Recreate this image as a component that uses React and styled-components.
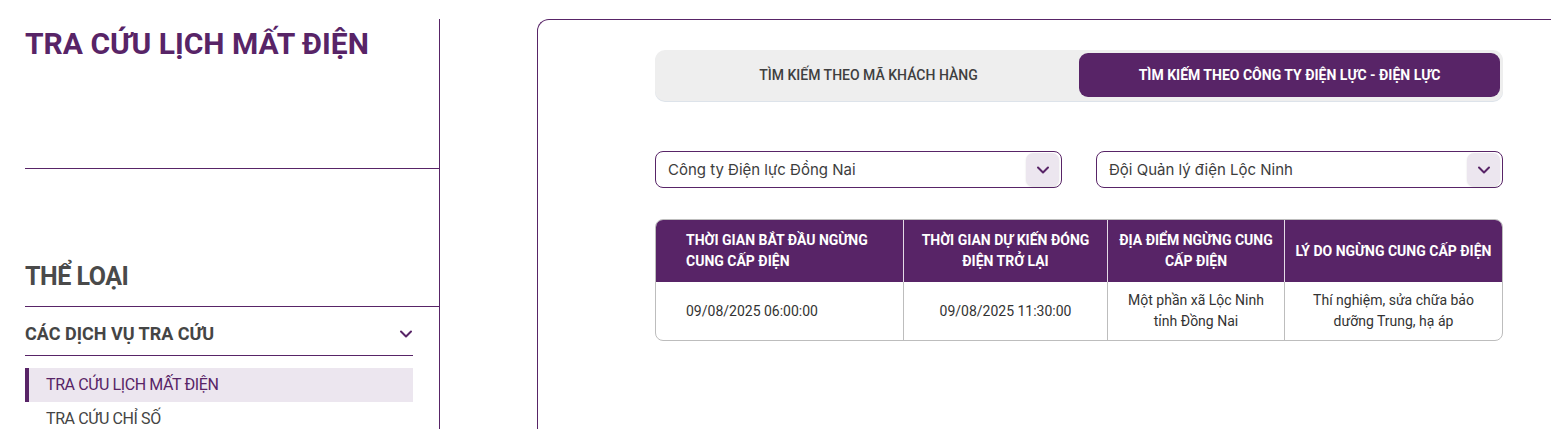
import styled, { createGlobalStyle } from "styled-components";

const purple = "#582467";

const Global = createGlobalStyle`
  *, *::before, *::after { box-sizing: border-box; }
  html, body {
    margin: 0;
    padding: 0;
    overflow: hidden;
    background: #fff;
    font-family: Roboto, "Liberation Sans", sans-serif;
  }
`;

const Page = styled.div`
  display: flex;
  height: 100vh;
  overflow: hidden;
`;

const Sidebar = styled.aside`
  flex-shrink: 0;
  width: 440px;
  margin-top: 19px;
  padding-left: 25px;
  border-right: 1px solid ${purple};
  display: flex;
  flex-direction: column;
  & > * { flex-shrink: 0; }
`;

const TitleBox = styled.div`
  height: 150px;
  padding-top: 7px;
  border-bottom: 1px solid ${purple};
`;

const Title = styled.h1`
  margin: 0;
  font-size: 30px;
  line-height: 36px;
  font-weight: 700;
  color: ${purple};
`;

const Category = styled.h2`
  margin: 93px 0 0;
  padding-bottom: 14px;
  font-size: 25px;
  line-height: 30px;
  font-weight: 700;
  letter-spacing: -0.5px;
  color: #4a4a4a;
  border-bottom: 1px solid ${purple};
`;

const Group = styled.div`
  width: 388px;
`;

const GroupHead = styled.div`
  display: flex;
  justify-content: space-between;
  align-items: center;
  padding: 17px 0 11px;
  border-bottom: 1px solid ${purple};
  font-size: 18px;
  line-height: 20px;
  font-weight: 700;
  color: #454545;
`;

const MenuList = styled.div`
  margin-top: 12px;
  display: flex;
  flex-direction: column;
`;

const MenuItem = styled.div`
  height: 34px;
  line-height: 34px;
  font-size: 16px;
  letter-spacing: -0.4px;
  color: ${(p) => (p.$active ? purple : "#444")};
  background: ${(p) => (p.$active ? "#ece6ef" : "transparent")};
  border-left: ${(p) => (p.$active ? `4px solid ${purple}` : "none")};
  padding-left: ${(p) => (p.$active ? "17px" : "21px")};
`;

const Panel = styled.main`
  flex: 1;
  margin: 19px 0 0 97px;
  padding: 30px 48px 0 117px;
  border-top: 1px solid ${purple};
  border-left: 1px solid ${purple};
  border-top-left-radius: 12px;
`;

const Content = styled.div`
  width: 848px;
  display: flex;
  flex-direction: column;
`;

const Tabs = styled.div`
  display: grid;
  grid-template-columns: 1fr 1fr;
  padding: 3px 3px 4px;
  background: #eeeeee;
  border-radius: 10px;
  box-shadow: 0 1px 0 #dde3ea;
`;

const Tab = styled.div`
  height: 44px;
  display: flex;
  align-items: center;
  justify-content: center;
  border-radius: 9px;
  font-size: 14px;
  font-weight: ${(p) => (p.$active ? 700 : 500)};
  color: ${(p) => (p.$active ? "#fff" : "#3f3f3f")};
  background: ${(p) => (p.$active ? purple : "transparent")};
`;

const Filters = styled.div`
  margin-top: 50px;
  display: flex;
  justify-content: space-between;
`;

const Select = styled.div`
  width: 407px;
  height: 37px;
  border: 1px solid ${purple};
  border-radius: 8px;
  display: flex;
  align-items: center;
  justify-content: space-between;
  padding: 0 2px 0 12px;
  font-family: Inter, Roboto, sans-serif;
  font-size: 15px;
  color: #3d3d3d;
`;

const Caret = styled.span`
  width: 33px;
  height: 33px;
  border-radius: 7px;
  background: #ece6ef;
  box-shadow: 0 1px 2px rgba(0, 0, 0, 0.12);
  display: flex;
  align-items: center;
  justify-content: center;
`;

const Table = styled.div`
  margin-top: 31px;
  display: grid;
  grid-template-columns: 247px 204px 177px 218px;
  border: 1px solid #bdbdbd;
  border-radius: 8px;
  overflow: hidden;
`;

const Th = styled.div`
  height: 62px;
  display: flex;
  align-items: center;
  justify-content: ${(p) => (p.$left ? "flex-start" : "center")};
  text-align: ${(p) => (p.$left ? "left" : "center")};
  padding: 0 ${(p) => (p.$left ? "30px" : "10px")};
  background: ${purple};
  color: #fff;
  font-size: 14px;
  line-height: 21px;
  font-weight: 700;
  border-left: ${(p) => (p.$first ? "none" : "1px solid #e4dbe6")};
`;

const Td = styled.div`
  height: 58px;
  display: flex;
  align-items: center;
  justify-content: ${(p) => (p.$left ? "flex-start" : "center")};
  text-align: ${(p) => (p.$left ? "left" : "center")};
  padding: 0 ${(p) => (p.$left ? "30px" : "18px")};
  color: #333;
  font-size: 14px;
  line-height: 21px;
  border-left: ${(p) => (p.$first ? "none" : "1px solid #bdbdbd")};
`;

const Chevron = ({ size = 14, width = 2 }) => (
  <svg width={size} height={size} viewBox="0 0 14 14" fill="none">
    <path d="M2 4.5 L7 9.5 L12 4.5" stroke={purple} strokeWidth={width} strokeLinecap="round" strokeLinejoin="round" />
  </svg>
);

const headers = [
  "THỜI GIAN BẮT ĐẦU NGỪNG CUNG CẤP ĐIỆN",
  "THỜI GIAN DỰ KIẾN ĐÓNG ĐIỆN TRỞ LẠI",
  "ĐỊA ĐIỂM NGỪNG CUNG CẤP ĐIỆN",
  "LÝ DO NGỪNG CUNG CẤP ĐIỆN",
];

const row = [
  "09/08/2025 06:00:00",
  "09/08/2025 11:30:00",
  "Một phần xã Lộc Ninh tỉnh Đồng Nai",
  "Thí nghiệm, sửa chữa bảo dưỡng Trung, hạ áp",
];

export default function App() {
  return (
    <>
      <Global />
      <Page>
        <Sidebar>
          <TitleBox>
            <Title>TRA CỨU LỊCH MẤT ĐIỆN</Title>
          </TitleBox>
          <Category>THỂ LOẠI</Category>
          <Group>
            <GroupHead>
              CÁC DỊCH VỤ TRA CỨU
              <Chevron size={14} width={2} />
            </GroupHead>
            <MenuList>
              <MenuItem $active>TRA CỨU LỊCH MẤT ĐIỆN</MenuItem>
              <MenuItem>TRA CỨU CHỈ SỐ</MenuItem>
            </MenuList>
          </Group>
        </Sidebar>
        <Panel>
          <Content>
            <Tabs>
              <Tab>TÌM KIẾM THEO MÃ KHÁCH HÀNG</Tab>
              <Tab $active>TÌM KIẾM THEO CÔNG TY ĐIỆN LỰC - ĐIỆN LỰC</Tab>
            </Tabs>
            <Filters>
              <Select>
                Công ty Điện lực Đồng Nai
                <Caret><Chevron size={14} width={2} /></Caret>
              </Select>
              <Select>
                Đội Quản lý điện Lộc Ninh
                <Caret><Chevron size={14} width={2} /></Caret>
              </Select>
            </Filters>
            <Table>
              {headers.map((h, i) => (
                <Th key={h} $left={i === 0} $first={i === 0}>{h}</Th>
              ))}
              {row.map((c, i) => (
                <Td key={c} $left={i === 0} $first={i === 0}>{c}</Td>
              ))}
            </Table>
          </Content>
        </Panel>
      </Page>
    </>
  );
}
